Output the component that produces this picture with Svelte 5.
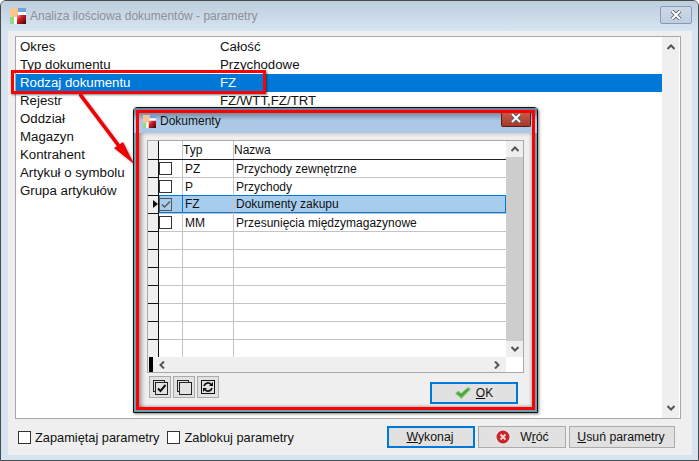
<script lang="ts">
	const params = [
		['Okres', 'Całość'],
		['Typ dokumentu', 'Przychodowe'],
		['Rodzaj dokumentu', 'FZ'],
		['Rejestr', 'FZ/WTT,FZ/TRT'],
		['Oddział', ''],
		['Magazyn', ''],
		['Kontrahent', ''],
		['Artykuł o symbolu', ''],
		['Grupa artykułów', '']
	];
	const docs = [
		{ typ: 'PZ', nazwa: 'Przychody zewnętrzne', on: false },
		{ typ: 'P', nazwa: 'Przychody', on: false },
		{ typ: 'FZ', nazwa: 'Dokumenty zakupu', on: true },
		{ typ: 'MM', nazwa: 'Przesunięcia międzymagazynowe', on: false }
	];
	const emptyRows = Array(7).fill(0);
</script>

{#snippet appIcon(size: number)}
	<svg class="app-icon" width={size} height={size} viewBox="0 0 16 16">
		<defs>
			<linearGradient id="cube" x1="0" y1="0" x2="1" y2="1">
				<stop offset="0" stop-color="#f0a0a0" />
				<stop offset="0.35" stop-color="#d81f26" />
				<stop offset="1" stop-color="#3a0408" />
			</linearGradient>
		</defs>
		<rect x="0" y="0" width="16" height="16" fill="#fff" />
		<rect x="0" y="0" width="8" height="9" fill="#f7c58d" />
		<rect x="8" y="0" width="8" height="4" fill="#6fa3dc" />
		<rect x="0" y="9" width="4" height="7" fill="#93d98a" />
		<rect x="7" y="7" width="9" height="9" fill="url(#cube)" />
	</svg>
{/snippet}

{#snippet closeGlyph()}
	<svg width="12" height="10" viewBox="0 0 12 10">
		<path d="M2 1 L10 9 M10 1 L2 9" stroke="#555c68" stroke-width="3.8" />
		<path d="M2 1 L10 9 M10 1 L2 9" stroke="#fff" stroke-width="2" />
	</svg>
{/snippet}

{#snippet chevron(dir: string)}
	<svg class="chev {dir}" width="8" height="6" viewBox="0 0 8 6">
		<path d="M0.5 5 L4 1.5 L7.5 5" fill="none" stroke="#555" stroke-width="2" />
	</svg>
{/snippet}

<div class="screen">
	<div class="titlebar">
		{@render appIcon(16)}
		<span class="title">Analiza ilościowa dokumentów - parametry</span>
		<div class="close-btn">{@render closeGlyph()}</div>
	</div>

	<div class="client">
		<div class="list-box">
			<div class="rows">
				{#each params as [label, value], i}
					<div class="param" class:selected={i === 2}>
						<span class="param-label">{label}</span>
						<span>{value}</span>
					</div>
				{/each}
			</div>
			<div class="vscroll">
				{@render chevron('up')}
				{@render chevron('down')}
			</div>
		</div>

		<div class="footer">
			<span class="check"></span>
			<span class="check-label">Zapamiętaj parametry</span>
			<span class="check second"></span>
			<span class="check-label">Zablokuj parametry</span>
			<div class="buttons">
				<div class="btn wykonaj default"><span><u>W</u>ykonaj</span></div>
				<div class="btn wroc">
					<svg width="16" height="16" viewBox="0 0 16 16">
						<circle cx="8" cy="8" r="7.5" fill="#f2e6e6" />
						<circle cx="8" cy="8" r="6.5" fill="#c4262c" />
						<path d="M5.5 5.5 L10.5 10.5 M10.5 5.5 L5.5 10.5" stroke="#f3d0d0" stroke-width="2" />
					</svg>
					<span>W<u>r</u>óć</span>
				</div>
				<div class="btn usun"><span><u>U</u>suń parametry</span></div>
			</div>
		</div>
	</div>

	<div class="dialog">
		<div class="dlg-title">
			{@render appIcon(13)}
			<span>Dokumenty</span>
			<div class="dlg-close">{@render closeGlyph()}</div>
		</div>
		<div class="dlg-client">
			<div class="grid-box">
				<div class="grid-main">
					<div class="grid">
						<div class="g-row head">
							<div class="c-ind"></div>
							<div class="c-chk"></div>
							<div class="c-typ">Typ</div>
							<div class="c-name">Nazwa</div>
						</div>
						{#each docs as d}
							<div class="g-row" class:on={d.on}>
								<div class="c-ind">
									{#if d.on}<span class="pointer"></span>{/if}
								</div>
								<div class="c-chk">
									<span class="box">
										{#if d.on}
											<svg width="10" height="9" viewBox="0 0 10 9">
												<path d="M1 4.5 L3.5 7 L9 1.5" fill="none" stroke="#555" stroke-width="1.4" />
											</svg>
										{/if}
									</span>
								</div>
								<div class="c-typ">{d.typ}</div>
								<div class="c-name">{d.nazwa}</div>
							</div>
						{/each}
						{#each emptyRows as _}
							<div class="g-row">
								<div class="c-ind"></div>
								<div class="c-chk"></div>
								<div class="c-typ"></div>
								<div class="c-name"></div>
							</div>
						{/each}
						<div class="g-row last">
							<div class="c-ind"></div>
							<div class="c-chk"></div>
							<div class="c-typ"></div>
							<div class="c-name"></div>
						</div>
					</div>
					<div class="grid-vscroll">
						<div class="gv-btn">{@render chevron('up')}</div>
						<div class="gv-thumb"></div>
						<div class="gv-btn">{@render chevron('down')}</div>
					</div>
				</div>
				<div class="hscroll">
					<span class="h-mark"></span>
					{@render chevron('left')}
					{@render chevron('right')}
				</div>
			</div>

			<div class="dlg-footer">
				<div class="tool-btn">
					<svg width="15" height="15" viewBox="0 0 15 15">
						<rect x="0.5" y="0.5" width="11" height="11" fill="none" stroke="#222" />
						<rect x="2.5" y="2.5" width="12" height="12" fill="#e2e2e2" stroke="#222" />
						<path d="M5 8.5 L7.5 11 L12.5 5" fill="none" stroke="#111" stroke-width="2" />
					</svg>
				</div>
				<div class="tool-btn">
					<svg width="15" height="15" viewBox="0 0 15 15">
						<rect x="0.5" y="0.5" width="11" height="11" fill="none" stroke="#222" />
						<rect x="2.5" y="2.5" width="12" height="12" fill="#e2e2e2" stroke="#222" />
					</svg>
				</div>
				<div class="tool-btn">
					<svg width="14" height="14" viewBox="0 0 14 14">
						<rect x="0.5" y="0.5" width="13" height="13" fill="#e2e2e2" stroke="#111" />
						<path d="M3 6 A4 4 0 0 1 10 4.5 M11 8 A4 4 0 0 1 4 9.5" fill="none" stroke="#111" stroke-width="1.7" />
						<path d="M8 6 L12 6 L12 2 Z M6 8 L2 8 L2 12 Z" fill="#111" />
					</svg>
				</div>
				<div class="btn ok default">
					<svg width="16" height="12" viewBox="0 0 16 12">
						<path d="M0.5 6.5 L3.5 4 L6 6.5 L13 0.5 L15.5 2 L6.5 11.5 Z" fill="#5cc04a" stroke="#7fb877" stroke-width="0.6" />
						<path d="M3.5 6 L6 8.5 L13 2.5" fill="none" stroke="#3f9a34" stroke-width="1.2" />
					</svg>
					<span><u>O</u>K</span>
				</div>
			</div>
		</div>
	</div>

	<div class="mark mark-row"></div>
	<div class="mark mark-dialog"></div>
	<svg class="arrow" width="70" height="90" viewBox="0 0 70 90">
		<path d="M0 0 L46 61" stroke="#f00000" stroke-width="3.6" />
		<path d="M55 71 L35 55 L44 49 Z" fill="#f00000" />
	</svg>
</div>

<style>
	:global(body) {
		margin: 0;
		background: #fff;
	}

	.screen {
		position: relative;
		width: 699px;
		height: 461px;
		box-sizing: border-box;
		display: flex;
		flex-direction: column;
		border: 1px solid #4a4a4a;
		border-radius: 6px 6px 0 0;
		background: #d6e4f2;
		font-family: "Liberation Sans", Arial, sans-serif;
		font-size: 12px;
		color: #111;
		overflow: hidden;
	}

	.titlebar {
		height: 30px;
		flex: none;
		display: flex;
		align-items: center;
		padding: 0 6px 0 9px;
		background: linear-gradient(#bccddc, #d8e5f3);
	}

	.title {
		margin-left: 4px;
		color: #8a9199;
	}

	.app-icon {
		flex: none;
	}

	.close-btn {
		margin-left: auto;
		margin-top: -2px;
		width: 30px;
		height: 16px;
		display: flex;
		align-items: center;
		justify-content: center;
		border: 1px solid #8a9ab5;
		border-radius: 2px;
		background: linear-gradient(#ccd8e6, #bfcee0);
	}

	.client {
		flex: 1;
		min-height: 0;
		margin: 0 6px 5px 7px;
		display: flex;
		flex-direction: column;
		background: #efefef;
	}

	.list-box {
		margin: 5px 11px 0 7px;
		flex: 1;
		min-height: 0;
		display: flex;
		border: 1px solid #a8a8a8;
		background: #fff;
		font-size: 13.25px;
	}

	.rows {
		flex: 1;
		padding-top: 1px;
	}

	.param {
		height: 18px;
		box-sizing: border-box;
		padding: 0 0 2px 4px;
		display: flex;
		align-items: center;
	}

	.param-label {
		width: 200px;
	}

	.selected {
		background: #0078d7;
		color: #fff;
	}

	.vscroll {
		width: 17px;
		background: #efefef;
		display: flex;
		flex-direction: column;
		align-items: center;
		justify-content: space-between;
		padding: 7px 0;
		margin-right: 1px;
		box-sizing: border-box;
	}

	.chev {
		display: block;
	}

	.chev.down {
		transform: rotate(180deg);
	}

	.chev.left {
		transform: rotate(-90deg);
	}

	.chev.right {
		transform: rotate(90deg);
	}

	.footer {
		height: 36px;
		flex: none;
		display: flex;
		align-items: center;
		padding-left: 10px;
	}

	.check {
		width: 11px;
		height: 11px;
		border: 1px solid #333;
		background: #fff;
		flex: none;
	}

	.check.second {
		margin-left: 8px;
	}

	.check-label {
		margin-left: 4px;
		font-size: 12.8px;
	}

	.buttons {
		margin-left: auto;
		margin-right: 17px;
		display: flex;
		gap: 3px;
		font-size: 12.3px;
	}

	.btn {
		height: 22px;
		box-sizing: border-box;
		display: flex;
		align-items: center;
		justify-content: center;
		gap: 9px;
		border: 1px solid #ababab;
		background: #e1e1e1;
	}

	.btn.default {
		border: 2px solid #0078d7;
	}

	.wykonaj {
		width: 88px;
		padding-right: 2px;
	}

	.wroc {
		width: 88px;
	}

	.usun {
		width: 106px;
		padding-right: 2px;
	}

	.dialog {
		position: absolute;
		left: 132px;
		top: 106px;
		width: 405px;
		height: 306px;
		box-sizing: border-box;
		display: flex;
		flex-direction: column;
		border: 1px solid #111;
		border-radius: 4px 4px 0 0;
		background: #6f9eae;
		box-shadow: 1px 1px 3px rgba(0, 0, 0, 0.5);
	}

	.dlg-title {
		height: 25px;
		flex: none;
		display: flex;
		align-items: center;
		padding: 1px 6px 0 9px;
		box-sizing: border-box;
		background: linear-gradient(#6f8298 15%, #abc9e6 50%);
	}

	.dlg-title span {
		margin-left: 4px;
	}

	.dlg-close {
		margin-left: auto;
		margin-top: -5px;
		width: 28px;
		height: 15px;
		display: flex;
		align-items: center;
		justify-content: center;
		border: 1px solid #5a1a1a;
		border-top: none;
		border-radius: 0 0 2px 2px;
		background: linear-gradient(#c9604c, #a63a2a);
	}

	.dlg-client {
		flex: 1;
		min-height: 0;
		margin: 0 4px 4px 4px;
		padding: 7px 9px 0 9px;
		display: flex;
		flex-direction: column;
		background: #efefef;
		box-shadow: inset 5px 1px 5px -2px rgba(0, 0, 0, 0.45), inset -3px -3px 3px -1px rgba(0, 0, 0, 0.25);
	}

	.grid-box {
		height: 231px;
		flex: none;
		display: flex;
		flex-direction: column;
		border: 1px solid #a8a8a8;
		background: #fff;
	}

	.grid-main {
		flex: 1;
		min-height: 0;
		display: flex;
	}

	.grid {
		flex: 1;
		min-width: 0;
		overflow: hidden;
	}

	.g-row {
		height: 18px;
		box-sizing: border-box;
		display: flex;
		border-bottom: 1px solid #c4c4c4;
	}

	.g-row.last {
		border-bottom: none;
	}

	.g-row.head {
		height: 19px;
		border-bottom: 1px solid #222;
	}

	.g-row > div {
		box-sizing: border-box;
		display: flex;
		align-items: center;
	}

	.c-ind {
		width: 11px;
		flex: none;
		background: #efefef;
		border-right: 1px solid #111;
		margin-bottom: -1px;
		border-bottom: 1px solid #111;
		position: relative;
	}

	.c-chk {
		width: 24px;
		flex: none;
		border-right: 1px solid #c4c4c4;
	}

	.c-typ {
		width: 51px;
		flex: none;
		border-right: 1px solid #c4c4c4;
		padding-left: 2px;
	}

	.c-name {
		flex: 1;
		padding-left: 2px;
	}

	.head .c-typ,
	.head .c-name {
		padding-left: 0;
	}

	.box {
		width: 11px;
		height: 11px;
		border: 1px solid #333;
		display: flex;
		align-items: center;
		justify-content: center;
		background: #fff;
	}

	.g-row.on {
		position: relative;
	}

	.g-row.on .c-chk,
	.g-row.on .c-typ,
	.g-row.on .c-name {
		background: #a6cdee;
		border-top: 1px solid #0078d7;
		border-bottom: 1px solid #0078d7;
		margin-top: -1px;
		height: 18px;
	}

	.g-row.on .c-chk {
		border-left: 1px solid #0078d7;
		border-right: 1px solid #0078d7;
	}

	.g-row.on .c-chk .box {
		margin-left: -1px;
		background: transparent;
		border-color: #555;
	}

	.g-row.on .c-name {
		border-right: 1px solid #0078d7;
	}

	.pointer {
		position: absolute;
		right: 0;
		top: 4px;
		width: 0;
		height: 0;
		border-left: 5px solid #111;
		border-top: 4px solid transparent;
		border-bottom: 4px solid transparent;
	}

	.grid-vscroll {
		width: 17px;
		flex: none;
		background: #efefef;
		display: flex;
		flex-direction: column;
	}

	.gv-btn {
		height: 16px;
		flex: none;
		display: flex;
		align-items: center;
		justify-content: center;
	}

	.gv-thumb {
		flex: 1;
		background: #cdcdcd;
	}

	.hscroll {
		height: 15px;
		flex: none;
		display: flex;
		align-items: center;
		background: #efefef;
		margin-right: 17px;
		padding-left: 1px;
	}

	.h-mark {
		width: 4px;
		height: 15px;
		background: #000;
		margin-right: 5px;
	}

	.hscroll .chev.right {
		margin-left: auto;
		margin-right: 5px;
	}

	.dlg-footer {
		flex: 1;
		display: flex;
		align-items: flex-start;
		gap: 2px;
		padding: 3px 0 0 2px;
	}

	.tool-btn {
		width: 22px;
		height: 22px;
		box-sizing: border-box;
		display: flex;
		align-items: center;
		justify-content: center;
		border: 1px solid #ababab;
		background: #e1e1e1;
	}

	.btn.ok {
		width: 88px;
		height: 22px;
		margin-left: auto;
		margin-right: 6px;
		margin-top: 6px;
		gap: 5px;
	}

	.mark {
		position: absolute;
		box-sizing: border-box;
		border: 3px solid #f00;
		pointer-events: none;
	}

	.mark-row {
		left: 10px;
		top: 69px;
		width: 255px;
		height: 24px;
		box-shadow: 1px 1px 2px rgba(0, 0, 0, 0.5);
	}

	.mark-dialog {
		left: 135px;
		top: 109px;
		width: 399px;
		height: 300px;
	}

	.arrow {
		position: absolute;
		left: 78px;
		top: 92px;
		pointer-events: none;
		filter: drop-shadow(1px 1px 1px rgba(0, 0, 0, 0.35));
	}
</style>
